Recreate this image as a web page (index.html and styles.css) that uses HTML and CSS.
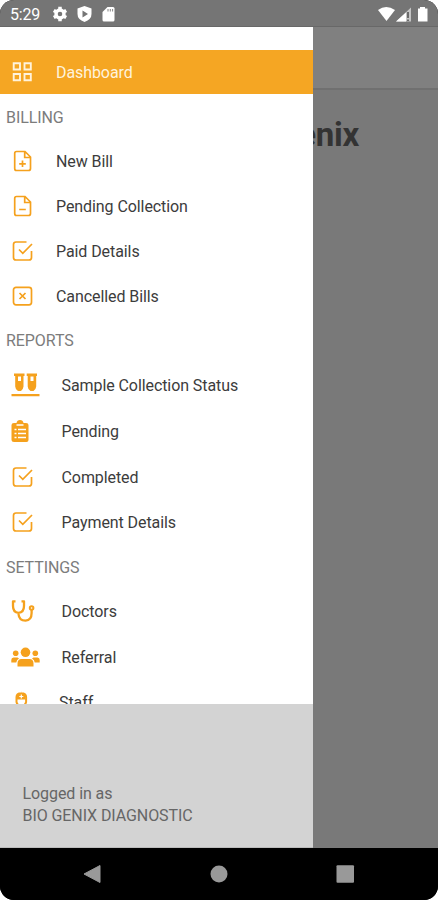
FILE: index.html
```html
<!DOCTYPE html>
<html lang="en">
<head>
<meta charset="utf-8">
<title>Bio Genix</title>
<link rel="stylesheet" href="styles.css">
</head>
<body>
<svg class="defs" width="0" height="0">
  <symbol id="check" viewBox="0 0 32 32"><path d="M20.500 7H10Q7.500 7 7.500 9.500V22.500Q7.500 25 10 25H23Q25.500 25 25.500 22.500V16M13 14.500L16.800 18.300L26 9" fill="none" stroke="currentColor" stroke-width="1.700"/></symbol>
</svg>
<div class="phone">
  <header class="status">
    <span class="time">5:29</span>
    <svg class="status-left" width="60" height="18" viewBox="0 0 60 18" fill="#fff">
      <circle cx="8" cy="9" r="4" fill="none" stroke="#fff" stroke-width="3.400"/><path d="M8 1.800V4M8 14V16.200M1.800 5.400L3.700 6.500M12.300 11.500L14.200 12.600M1.800 12.600L3.700 11.500M12.300 6.500L14.200 5.400" stroke="#fff" stroke-width="3.500"/>
      <path d="M32.500 1L39.500 3.500V9Q39.500 14.500 32.500 17Q25.500 14.500 25.500 9V3.500Z"/><path d="M30.500 5.500L36 9L30.500 12.500Z" fill="#757575"/>
      <path d="M55.500 2H61Q62.500 2 62.500 3.500V15Q62.500 16.500 61 16.500H52Q50.500 16.500 50.500 15V7Z"/><path d="M56 4V6.500M58.300 4V6.500M60.600 4V6.500" stroke="#777" stroke-width=".9"/>
    </svg>
    <svg class="status-right" width="52" height="18" viewBox="0 0 52 18">
      <path d="M1 5Q9 -1 18 5L9.500 16Z" fill="#fff"/><path d="M19 16.500L34 2.500V16.500Z" fill="#c5c5c5"/><path d="M19 16.500L29 7.500V16.500Z" fill="#fff"/><path d="M31 7V13M31 14.500V16" stroke="#606060" stroke-width="1.800"/><path d="M43 2H48V3.500H50.500V16.500H41V3.500H43Z" fill="#fff"/>
    </svg>
  </header>
  <div class="screen">
    <aside class="drawer">
      <nav class="menu">
        <a class="row active"><svg viewBox="0 0 32 32"><path d="M7.700 7.200H14V13.500H7.700ZM18.500 7.200H24.800V13.500H18.500ZM7.700 18H14V24.300H7.700ZM18.500 18H24.800V24.300H18.500Z" fill="none" stroke="currentColor" stroke-width="1.900"/></svg><span>Dashboard</span></a>
        <h2 class="first">BILLING</h2>
        <a class="row"><svg viewBox="0 0 32 32"><path d="M10.500 6.500H19L24.500 12V23.500Q24.500 25.500 22.500 25.500H10.500Q8.700 25.500 8.700 23.500V8.500Q8.700 6.500 10.500 6.500ZM18.700 7V12.500H24M16.500 15.500V22M13.200 18.800H19.800" fill="none" stroke="currentColor" stroke-width="1.700"/></svg><span>New Bill</span></a>
        <a class="row"><svg viewBox="0 0 32 32"><path d="M10.500 6.500H19L24.500 12V23.500Q24.500 25.500 22.500 25.500H10.500Q8.700 25.500 8.700 23.500V8.500Q8.700 6.500 10.500 6.500ZM18.700 7V12.500H24M13.200 19.500H19.800" fill="none" stroke="currentColor" stroke-width="1.700"/></svg><span>Pending Collection</span></a>
        <a class="row"><svg><use href="#check"/></svg><span>Paid Details</span></a>
        <a class="row"><svg viewBox="0 0 32 32"><rect x="7.500" y="7.300" width="18" height="17.500" rx="2.500" fill="none" stroke="currentColor" stroke-width="1.700"/><path d="M13.500 13L19.500 19M19.500 13L13.500 19" stroke="currentColor" stroke-width="1.700"/></svg><span>Cancelled Bills</span></a>
        <h2>REPORTS</h2>
        <a class="row wide"><svg viewBox="0 0 32 32"><path d="M8 4.500H18.500V7H17.500V17.500Q17 21 15 22H12Q9.500 21 9.200 17.500V7H8ZM20.700 4.500H31V7H30.200V17.500Q29.800 21 27.500 22H24.500Q22 21 21.700 17.500V7H20.700ZM5.500 25H33.500V27.300H5.500Z" fill="currentColor"/><path d="M12 7.500H15V12H12ZM24.500 7.500H27.500V12H24.500Z" fill="#fff"/></svg><span>Sample Collection Status</span></a>
        <a class="row wide tall"><svg viewBox="0 0 32 32"><path d="M8 8H10.500Q11 5 14 5Q17 5 17.500 8H20Q22.500 8 22.500 10V25Q22.500 27 20.500 27H8Q5.500 27 5.500 25V10Q5.500 8 8 8Z" fill="currentColor"/><path d="M10.500 10H17.500M8.500 14.500H10.500M12 14.500H20M8.500 18.500H10.500M12 18.500H20M8.500 22.500H10.500M12 22.500H20" stroke="#fff" stroke-width="1.300"/></svg><span>Pending</span></a>
        <a class="row wide"><svg><use href="#check"/></svg><span>Completed</span></a>
        <a class="row wide mid"><svg><use href="#check"/></svg><span>Payment Details</span></a>
        <h2>SETTINGS</h2>
        <a class="row wide short"><svg viewBox="0 0 32 32"><path d="M9.500 6.300H7V11Q7 17.500 12.500 17.800Q18 17.500 18 11V6.300H15.500M12.500 18V19Q13 25.700 19.500 25.700Q25.600 25.200 25.600 18V14.500" fill="none" stroke="currentColor" stroke-width="2.300" stroke-linejoin="round"/><circle cx="25.600" cy="13" r="1.800" fill="#fff" stroke="currentColor" stroke-width="2"/></svg><span>Doctors</span></a>
        <a class="row wide big"><svg viewBox="0 0 32 32"><g fill="currentColor"><circle cx="19.500" cy="11.300" r="4.800"/><circle cx="9.700" cy="12.200" r="2.800"/><circle cx="29.300" cy="12.200" r="2.800"/><path d="M11.500 25.500V22.500Q11.500 18 15.500 18H23.500Q27.500 18 27.500 22.500V25.500ZM5.300 21.500V19Q5.300 16.500 7.500 16.500H11.500L13 17.500Q10.500 19 10.300 21.500ZM33.700 21.500V19Q33.700 16.500 31.500 16.500H27.500L26 17.500Q28.500 19 28.700 21.500Z"/></g></svg><span>Referral</span></a>
        <a class="row wide staff"><svg viewBox="0 0 32 32"><path d="M15.300 6.500H15.500M10.500 16V11Q10.500 7.200 15.300 7.200Q20.100 7.200 20.100 11V16Q19 20 15.300 20Q11.500 20 10.500 16ZM6 27Q8 22 15.300 21.500Q23 22 25 27" fill="#fff" stroke="currentColor" stroke-width="2"/><path d="M11 8H19.500V13.500H11Z" fill="currentColor"/><path d="M15.300 8.500V12.500M13.300 10.500H17.300" stroke="#fff" stroke-width="1.200"/></svg><span>Staff</span></a>
      </nav>
      <footer class="user">Logged in as<br>BIO GENIX DIAGNOSTIC</footer>
    </aside>
    <main class="page">
      <div class="bar"></div>
      <h1>Bio Genix</h1>
    </main>
  </div>
  <div class="navbar">
    <svg width="438" height="52" viewBox="0 0 438 52" fill="#999"><path d="M84 26L100 17.500V34.500Z" stroke="#999" stroke-linejoin="round"/><circle cx="219" cy="26" r="8.500"/><rect x="336.500" y="17.300" width="17.500" height="17.500" rx="1"/></svg>
  </div>
</div>
</body>
</html>
```
FILE: styles.css
```css
* { box-sizing: border-box; }
body { margin: 0; background: #fff; font-family: Roboto, sans-serif; font-size: 16px; letter-spacing: -.08px; }
.defs { display: block; }
.phone { width: 438px; height: 900px; display: flex; flex-direction: column; overflow: hidden; border-radius: 14px; background: #000; }
.status { height: 27px; flex: none; display: flex; align-items: center; padding: 2px 9px 0 10px; background: #757575; border-bottom: 1px solid #686868; color: #fff; }
.time { width: 42px; letter-spacing: -.2px; }
.status-left { overflow: visible; }
.status-right { margin-left: auto; }
.status-right { overflow: visible; }
.screen { height: 821px; flex: none; display: flex; background: #797979; }
.drawer { width: 313px; flex: none; display: flex; flex-direction: column; background: #fff; z-index: 1; }
.menu { height: 677px; padding-top: 23px; overflow: hidden; }
.row { height: 45px; display: flex; align-items: center; padding-left: 6px; color: #f5a11d; }
.row svg { width: 32px; height: 32px; flex: none; overflow: visible; }
.row span { margin-left: 18px; padding-top: 1px; color: #3c3c3c; white-space: nowrap; }
.row.wide span { margin-left: 23.5px; }
.row.active { height: 44px; background: #f5a623; color: #fff3dc; }
.row.active span { padding: 0; color: #fff3dc; }
.row.tall { height: 47px; }
.row.mid { height: 46px; }
.row.short { height: 44px; }
.row.big { height: 48px; }
.row.staff { height: 42px; }
.row.staff span { margin-left: 21px; }
h2 { height: 44px; margin: 0; padding-left: 6px; font-size: 16px; font-weight: 400; line-height: 45px; color: #7c7c7c; }
h2.first { line-height: 47px; }
.user { height: 144px; padding: 79px 22.5px 0; background: #d3d3d3; border-bottom: 1px solid #bbb; color: #666; line-height: 22px; }
.page { flex: 1; min-width: 0; display: flex; flex-direction: column; align-items: flex-end; }
.bar { width: 100%; height: 63px; background: #808080; border-bottom: 2px solid #707070; }
h1 { margin: 26px 79px 0 0; font-size: 33px; letter-spacing: -.3px; line-height: 38px; font-weight: 700; color: #333; white-space: nowrap; }
.navbar { height: 52px; flex: none; background: #000; }
.navbar svg { display: block; }
```
